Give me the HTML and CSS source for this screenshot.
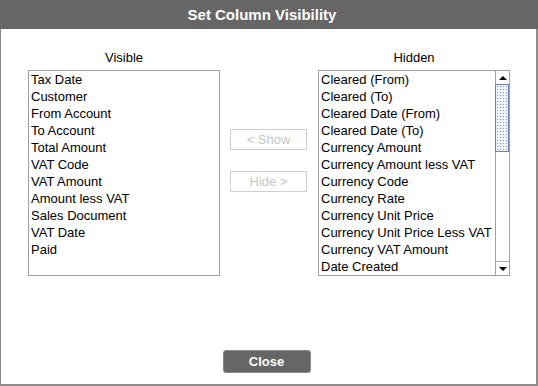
FILE: index.html
```html
<!DOCTYPE html>
<html lang="en">
<head>
    <meta charset="UTF-8">
    <meta name="viewport" content="width=device-width, initial-scale=1.0">
    <title>Set Column Visibility</title>
    <link rel="stylesheet" href="styles.css">
</head>
<body>
    <div class="dialog">
        <div class="title-bar">Set Column Visibility</div>
        <div class="columns">
            <div class="column">
                <div class="column-label">Visible</div>
                <ul class="list-box">
                    <li>Tax Date</li>
                    <li>Customer</li>
                    <li>From Account</li>
                    <li>To Account</li>
                    <li>Total Amount</li>
                    <li>VAT Code</li>
                    <li>VAT Amount</li>
                    <li>Amount less VAT</li>
                    <li>Sales Document</li>
                    <li>VAT Date</li>
                    <li>Paid</li>
                </ul>
            </div>
            <div class="actions">
                <button class="move-btn" disabled>&lt; Show</button>
                <button class="move-btn" disabled>Hide &gt;</button>
            </div>
            <div class="column">
                <div class="column-label">Hidden</div>
                <div class="list-box scrolling">
                    <ul class="list-items">
                        <li>Cleared (From)</li>
                        <li>Cleared (To)</li>
                        <li>Cleared Date (From)</li>
                        <li>Cleared Date (To)</li>
                        <li>Currency Amount</li>
                        <li>Currency Amount less VAT</li>
                        <li>Currency Code</li>
                        <li>Currency Rate</li>
                        <li>Currency Unit Price</li>
                        <li>Currency Unit Price Less VAT</li>
                        <li>Currency VAT Amount</li>
                        <li>Date Created</li>
                    </ul>
                    <div class="scrollbar">
                        <div class="scroll-btn"><span class="arrow-up"></span></div>
                        <div class="scroll-track">
                            <div class="scroll-thumb"></div>
                        </div>
                        <div class="scroll-btn bottom"><span class="arrow-down"></span></div>
                    </div>
                </div>
            </div>
        </div>
        <div class="footer">
            <button class="close-btn">Close</button>
        </div>
    </div>
</body>
</html>
```

FILE: styles.css
```css
body {
    margin: 0;
    font-family: "Liberation Sans", Arial, sans-serif;
    font-size: 13px;
    color: #000;
    background: #fff;
}
.dialog {
    box-sizing: border-box;
    width: 538px;
    height: 386px;
    display: flex;
    flex-direction: column;
    border-left: 1px solid #8c8c8c;
    border-right: 2px solid #8c8c8c;
    border-bottom: 2px solid #8c8c8c;
    background: #fff;
}
.title-bar {
    height: 29px;
    line-height: 30px;
    margin-left: -1px;
    margin-right: -2px;
    padding-right: 14px;
    background: #666;
    color: #fff;
    font-size: 15px;
    font-weight: bold;
    text-align: center;
}
.columns {
    display: flex;
    padding: 21px 0 0 27px;
    gap: 10px;
}
.column {
    width: 192px;
}
.column-label {
    height: 16px;
    line-height: 16px;
    margin-bottom: 4px;
    text-align: center;
}
.list-box {
    box-sizing: border-box;
    width: 192px;
    height: 206px;
    margin: 0;
    padding: 0 2px;
    list-style: none;
    border: 1px solid #a0a0a0;
    overflow: hidden;
}
.list-box li,
.list-items li {
    height: 17px;
    line-height: 17px;
    white-space: nowrap;
}
.list-box.scrolling {
    display: flex;
    padding: 0;
}
.list-items {
    flex: 1;
    margin: 0;
    padding: 0 0 0 2px;
    list-style: none;
    overflow: hidden;
}
.scrollbar {
    width: 13px;
    display: flex;
    flex-direction: column;
    border-left: 1px solid #a0a0a0;
}
.scroll-btn {
    height: 13px;
    display: flex;
    align-items: center;
    justify-content: center;
}
.scroll-btn.bottom {
    border-top: 1px solid #b0b0b0;
}
.arrow-up,
.arrow-down {
    width: 0;
    height: 0;
    border-left: 4px solid transparent;
    border-right: 4px solid transparent;
}
.arrow-up {
    border-bottom: 4px solid #000;
}
.arrow-down {
    border-top: 4px solid #000;
}
.scroll-track {
    flex: 1;
}
.scroll-thumb {
    box-sizing: border-box;
    height: 68px;
    margin-left: -1px;
    border: 1px solid #6f7fb0;
    background-color: #eef2fa;
    background-image: radial-gradient(circle, #8a98b8 0.7px, transparent 0.8px);
    background-size: 3px 3px;
}
.actions {
    width: 78px;
    display: flex;
    flex-direction: column;
    gap: 21px;
    padding-top: 79px;
}
.move-btn {
    box-sizing: border-box;
    width: 77px;
    height: 21px;
    padding: 0;
    background: #fff;
    border: 1px solid #cfcfcf;
    color: #c6c6c6;
    font-family: "Liberation Sans", Arial, sans-serif;
    font-size: 13px;
}
.footer {
    margin-top: auto;
    display: flex;
    justify-content: center;
    padding: 0 4px 11px 0;
}
.close-btn {
    width: 88px;
    height: 23px;
    padding: 0;
    background: #666;
    border: 1px solid #8a8a8a;
    border-radius: 3px;
    color: #fff;
    font-family: "Liberation Sans", Arial, sans-serif;
    font-size: 13px;
    font-weight: bold;
}
```
